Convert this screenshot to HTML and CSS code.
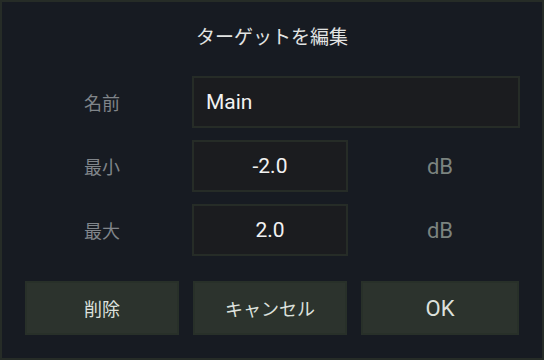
FILE: index.html
```html
<!DOCTYPE html>
<html lang="ja">
<head>
<meta charset="utf-8">
<link rel="stylesheet" href="styles.css">
</head>
<body>
<div class="dialog">
  <div class="title">ターゲットを編集</div>
  <div class="form">
    <div class="label">名前</div>
    <div class="field wide">Main</div>
    <div class="label">最小</div>
    <div class="field num">-2.0</div>
    <div class="unit">dB</div>
    <div class="label">最大</div>
    <div class="field num">2.0</div>
    <div class="unit">dB</div>
  </div>
  <div class="buttons">
    <div class="btn">削除</div>
    <div class="btn">キャンセル</div>
    <div class="btn latin">OK</div>
  </div>
</div>
</body>
</html>
```
FILE: styles.css
```css
html, body {
  margin: 0;
  padding: 0;
  background: #171b22;
}
.dialog {
  box-sizing: border-box;
  width: 544px;
  height: 360px;
  border: 2px solid #262c27;
  background: #171b22;
  padding: 21px 23px 0 23px;
  display: flex;
  flex-direction: column;
  font-family: Roboto, "Noto Sans CJK JP", sans-serif;
}
.title {
  height: 26px;
  line-height: 26px;
  text-align: center;
  font-family: "Noto Sans CJK JP", sans-serif;
  font-size: 19px;
  color: #e2e4e3;
}
.form {
  margin-top: 27px;
  display: grid;
  grid-template-columns: 154px 154px 158px;
  grid-auto-rows: 52px;
  column-gap: 14px;
  row-gap: 12px;
}
.label {
  display: flex;
  align-items: center;
  justify-content: center;
  font-family: "Noto Sans CJK JP", sans-serif;
  font-size: 18px;
  color: #80858a;
}
.field {
  margin: 0 -1px;
  box-sizing: border-box;
  border: 2px solid #262c27;
  background: #1b1c1f;
  display: flex;
  align-items: center;
  font-size: 21px;
  color: #f2f2f2;
}
.field.wide {
  grid-column: 2 / 4;
  padding-left: 12px;
}
.field.num {
  justify-content: center;
}
.unit {
  display: flex;
  align-items: center;
  justify-content: center;
  font-size: 22px;
  color: #7b837f;
}
.buttons {
  margin-top: 25px;
  display: grid;
  grid-template-columns: 154px 154px 158px;
  column-gap: 14px;
}
.btn {
  box-sizing: border-box;
  height: 54px;
  border: 2px solid #283029;
  background: #2c332d;
  display: flex;
  align-items: center;
  justify-content: center;
  font-family: "Noto Sans CJK JP", sans-serif;
  font-size: 18px;
  color: #dde1dd;
}
.btn.latin {
  font-family: Roboto, sans-serif;
  font-size: 22px;
}
```
